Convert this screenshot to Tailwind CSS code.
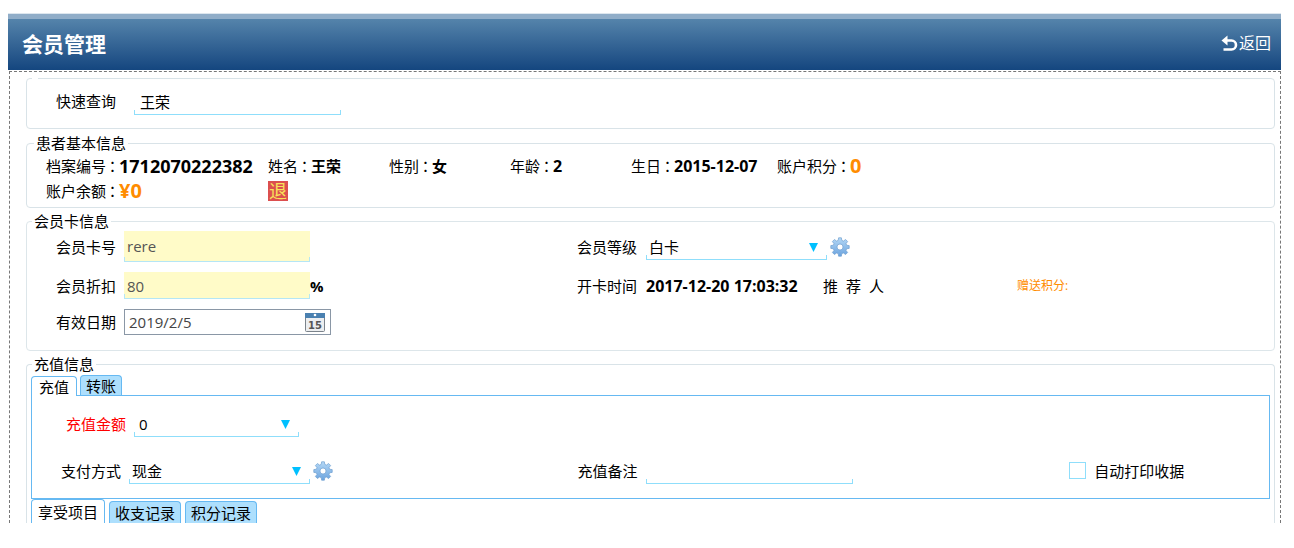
<!DOCTYPE html>
<html lang="zh-CN">
<head>
  <meta charset="UTF-8" />
  <meta name="viewport" content="width=device-width, initial-scale=1" />
  <title>会员管理</title>
  <script src="https://cdn.jsdelivr.net/npm/@tailwindcss/browser@4"></script>
</head>
<body class="bg-white font-['Open_Sans','Noto_Sans_CJK_SC',sans-serif] text-[15px] leading-5 text-black">

  <!-- gear shared by the two settings buttons -->
  <svg class="absolute h-0 w-0" aria-hidden="true">
    <defs>
      <linearGradient id="gearFill" x1="0" y1="0" x2="0" y2="1">
        <stop offset="0" stop-color="#b4d8f6" />
        <stop offset="1" stop-color="#6ba3de" />
      </linearGradient>
    </defs>
    <symbol id="gear" viewBox="0 0 20 20">
      <path fill="url(#gearFill)" stroke="#6f9fd0" stroke-width=".7" stroke-linejoin="round" fill-rule="evenodd" d="M8.6.8h2.8l.4 2.6 1.6.7 2.2-1.6 2 2-1.6 2.2.6 1.5 2.6.4v2.8l-2.6.4-.6 1.6 1.6 2.1-2 2-2.2-1.5-1.6.6-.4 2.6H8.6l-.4-2.6-1.6-.6-2.2 1.5-2-2L4 13.4l-.6-1.6-2.6-.4V8.6l2.6-.4L4 6.700 2.400 4.500l2-2 2.200 1.600 1.600-.7zM10 7a3 3 0 1 0 0 6 3 3 0 0 0 0-6z" />
    </symbol>
  </svg>

  <div class="ml-2 mr-[13px] pt-[13px]">
    <header class="flex h-[57px] items-center justify-between border-t border-[#dde6ee] bg-linear-to-b from-[#5b8aaf] to-[#14467f] pl-[14px] pr-[10px] text-white shadow-[inset_0_5px_0_#90adc8]">
      <h1 class="pt-1 text-[21px] font-bold">会员管理</h1>
      <a href="#" class="flex items-center gap-px pt-0.5 text-base">
        <svg class="h-[17px] w-[17px]" viewBox="0 0 17 17" fill="none">
          <path d="M.5 5.500 6.500.5v10z" fill="#fff" />
          <path d="M5 5.500h5.500a4.500 4.500 0 0 1 0 9H2.500" stroke="#fff" stroke-width="2.600" />
        </svg>
        返回
      </a>
    </header>

    <main class="ml-px mt-px border border-b-0 border-dashed border-[#777] pl-4 pr-[5px] pt-1.5">

      <fieldset class="rounded border border-[#d9e3e8] px-[5px] pb-[13px]">
        <legend class="h-px w-1.5"></legend>
        <div class="flex items-center pl-6 pt-2">
          <label for="keyword" class="w-[78px]">快速查询</label>
          <div class="relative w-[207px] after:pointer-events-none after:absolute after:inset-x-0 after:bottom-0 after:h-[5px] after:border after:border-t-0 after:border-[#8fdefb]">
            <input type="text" id="keyword" value="王荣" class="block h-7 w-full px-1.5 outline-none" />
          </div>
        </div>
      </fieldset>

      <fieldset class="mt-1 rounded border border-[#d9e3e8] pb-1 pl-[19px]">
        <legend class="-ml-3 px-0.5">患者基本信息</legend>
        <div class="grid auto-rows-[25px] grid-cols-[222px_121px_121px_121px_146px_auto]">
          <p class="flex items-center">档案编号<span class="flex w-[13px] justify-center font-['Noto_Sans_CJK_TC']">：</span><b class="text-lg leading-5">1712070222382</b></p>
          <p class="flex items-center">姓名<span class="flex w-[13px] justify-center font-['Noto_Sans_CJK_TC']">：</span><b>王荣</b></p>
          <p class="flex items-center">性别<span class="flex w-[13px] justify-center font-['Noto_Sans_CJK_TC']">：</span><b>女</b></p>
          <p class="flex items-center">年龄<span class="flex w-[13px] justify-center font-['Noto_Sans_CJK_TC']">：</span><b class="text-base leading-5">2</b></p>
          <p class="flex items-center">生日<span class="flex w-[13px] justify-center font-['Noto_Sans_CJK_TC']">：</span><b class="text-base leading-5">2015-12-07</b></p>
          <p class="flex items-center">账户积分<span class="flex w-[13px] justify-center font-['Noto_Sans_CJK_TC']">：</span><b class="text-xl leading-5 text-[#ff8c00]">0</b></p>
          <p class="flex items-center">账户余额<span class="flex w-[13px] justify-center font-['Noto_Sans_CJK_TC']">：</span><b class="text-xl leading-5 text-[#ff8c00]">¥0</b></p>
          <div class="flex items-center">
            <button type="button" class="h-5 w-5 bg-[#dc4f4f] text-lg leading-5 text-[#f8e25a]">退</button>
          </div>
        </div>
      </fieldset>

      <fieldset class="mt-[3px] rounded border border-[#dde6ea] px-[5px] pb-[15px]">
        <legend class="px-0.5">会员卡信息</legend>
        <div class="grid grid-cols-[521fr_692fr] gap-y-2.5 pl-6">
          <div class="flex items-center">
            <label for="cardNo" class="w-[68px]">会员卡号</label>
            <div class="relative w-[186px] after:pointer-events-none after:absolute after:inset-x-0 after:bottom-0 after:h-[5px] after:border after:border-t-0 after:border-[#b5e6f5]">
              <input type="text" id="cardNo" value="rere" class="block h-[31px] w-full bg-[#fffbc8] px-[3px] pb-0.5 text-[#555] outline-none" />
            </div>
          </div>
          <div class="flex items-center">
            <label for="level" class="w-[69px]">会员等级</label>
            <div class="relative w-[181px] after:pointer-events-none after:absolute after:inset-x-0 after:bottom-0 after:h-[5px] after:border after:border-t-0 after:border-[#8fdefb]">
              <select id="level" class="block h-[27px] w-full appearance-none px-[3px] outline-none">
                <option>白卡</option>
              </select>
              <svg class="pointer-events-none absolute right-[9px] top-[10px] h-[9px] w-[9px]" viewBox="0 0 9 9"><path d="M0 0h9L4.500 9z" fill="#00c0ff" /></svg>
            </div>
            <button type="button" aria-label="等级设置" class="ml-[3px]"><svg class="h-5 w-5"><use href="#gear" /></svg></button>
          </div>

          <div class="flex items-center">
            <label for="discount" class="w-[68px]">会员折扣</label>
            <div class="relative w-[186px] after:pointer-events-none after:absolute after:inset-x-0 after:bottom-0 after:h-[5px] after:border after:border-t-0 after:border-[#b5e6f5]">
              <input type="text" id="discount" value="80" class="block h-[27px] w-full bg-[#fffbc8] px-[3px] text-[#555] outline-none" />
            </div>
            <b>%</b>
          </div>
          <div class="grid grid-cols-[246fr_194fr_252fr] items-center">
            <p class="flex"><span class="w-[69px]">开卡时间</span><b class="text-base leading-5">2017-12-20 17:03:32</b></p>
            <p class="w-[61px] [text-align-last:justify]">推 荐 人</p>
            <p class="text-xs text-[#ff8c00]">赠送积分:</p>
          </div>

          <div class="flex items-center">
            <label for="expire" class="w-[68px]">有效日期</label>
            <div class="flex w-[207px] items-center border border-[#8a97a6] pr-[5px]">
              <input type="text" id="expire" value="2019/2/5" class="h-6 w-full min-w-0 px-1 text-[#444] outline-none" />
              <button type="button" aria-label="选择日期">
                <svg class="h-5 w-5" viewBox="0 0 20 20">
                  <rect x=".5" y="1.500" width="19" height="18" rx="1" fill="#eceef0" stroke="#7b838b" />
                  <path d="M0 1h20v5H0z" fill="#4a80b0" />
                  <circle cx="10" cy="3" r="1.300" fill="#fff" />
                  <text x="10" y="16.500" font-family="DejaVu Sans" font-size="10" font-weight="bold" text-anchor="middle" fill="#555">15</text>
                </svg>
              </button>
            </div>
          </div>
        </div>
      </fieldset>

      <fieldset class="mt-[3px] rounded-t border border-b-0 border-[#d9e3e8] px-1">
        <legend class="ml-px px-0.5">充值信息</legend>
        <div role="tablist" class="flex items-end gap-[3px] pt-px">
          <button type="button" role="tab" aria-selected="true" class="relative z-10 -mb-px h-5 rounded-t border border-b-0 border-[#66b9f2] bg-white px-[7px] leading-5">充值</button>
          <button type="button" role="tab" class="h-5 rounded-t border border-b-0 border-[#66b9f2] bg-[#addffd] px-[5px] leading-5">转账</button>
        </div>

        <div role="tabpanel" class="grid grid-cols-[517fr_492fr_229fr] items-center gap-y-5 border border-[#66b9f2] pb-[14px] pt-[14px]">
          <div class="flex items-center pl-[34px]">
            <label for="amount" class="w-[68px] text-[#f00]">充值金额</label>
            <div class="relative w-[165px] after:pointer-events-none after:absolute after:inset-x-0 after:bottom-0 after:h-[5px] after:border after:border-t-0 after:border-[#8fdefb]">
              <select id="amount" class="block h-[27px] w-full appearance-none px-[5px] outline-none">
                <option>0</option>
              </select>
              <svg class="pointer-events-none absolute right-[9px] top-[10px] h-[9px] w-[9px]" viewBox="0 0 9 9"><path d="M0 0h9L4.500 9z" fill="#00c0ff" /></svg>
            </div>
          </div>
          <div class="col-start-1 flex items-center pl-[29px]">
            <label for="payment" class="w-[68px]">支付方式</label>
            <div class="relative w-[181px] after:pointer-events-none after:absolute after:inset-x-0 after:bottom-0 after:h-[5px] after:border after:border-t-0 after:border-[#8fdefb]">
              <select id="payment" class="block h-[27px] w-full appearance-none px-[3px] outline-none">
                <option>现金</option>
              </select>
              <svg class="pointer-events-none absolute right-[9px] top-[10px] h-[9px] w-[9px]" viewBox="0 0 9 9"><path d="M0 0h9L4.500 9z" fill="#00c0ff" /></svg>
            </div>
            <button type="button" aria-label="支付方式设置" class="ml-[3px]"><svg class="h-5 w-5"><use href="#gear" /></svg></button>
          </div>
          <div class="flex items-center pl-[29px]">
            <label for="remark" class="w-[68px]">充值备注</label>
            <div class="relative w-[207px] after:pointer-events-none after:absolute after:inset-x-0 after:bottom-0 after:h-[5px] after:border after:border-t-0 after:border-[#8fdefb]">
              <input type="text" id="remark" class="block h-[27px] w-full px-1.5 outline-none" />
            </div>
          </div>
          <div class="flex items-center gap-2 pl-[29px]">
            <input type="checkbox" id="autoPrint" class="h-[17px] w-[17px] appearance-none border border-[#8fdefb] bg-white" />
            <label for="autoPrint">自动打印收据</label>
          </div>
        </div>

        <div role="tablist" class="flex h-6 items-end gap-1">
          <button type="button" role="tab" aria-selected="true" class="h-6 rounded-t border border-b-0 border-[#66b9f2] bg-white px-[6px] leading-6">享受项目</button>
          <button type="button" role="tab" class="h-[22px] rounded-t border border-b-0 border-[#66b9f2] bg-[#addffd] px-[5px] leading-5">收支记录</button>
          <button type="button" role="tab" class="h-[22px] rounded-t border border-b-0 border-[#66b9f2] bg-[#addffd] px-[5px] leading-5">积分记录</button>
        </div>
      </fieldset>
    </main>
  </div>

</body>
</html>
